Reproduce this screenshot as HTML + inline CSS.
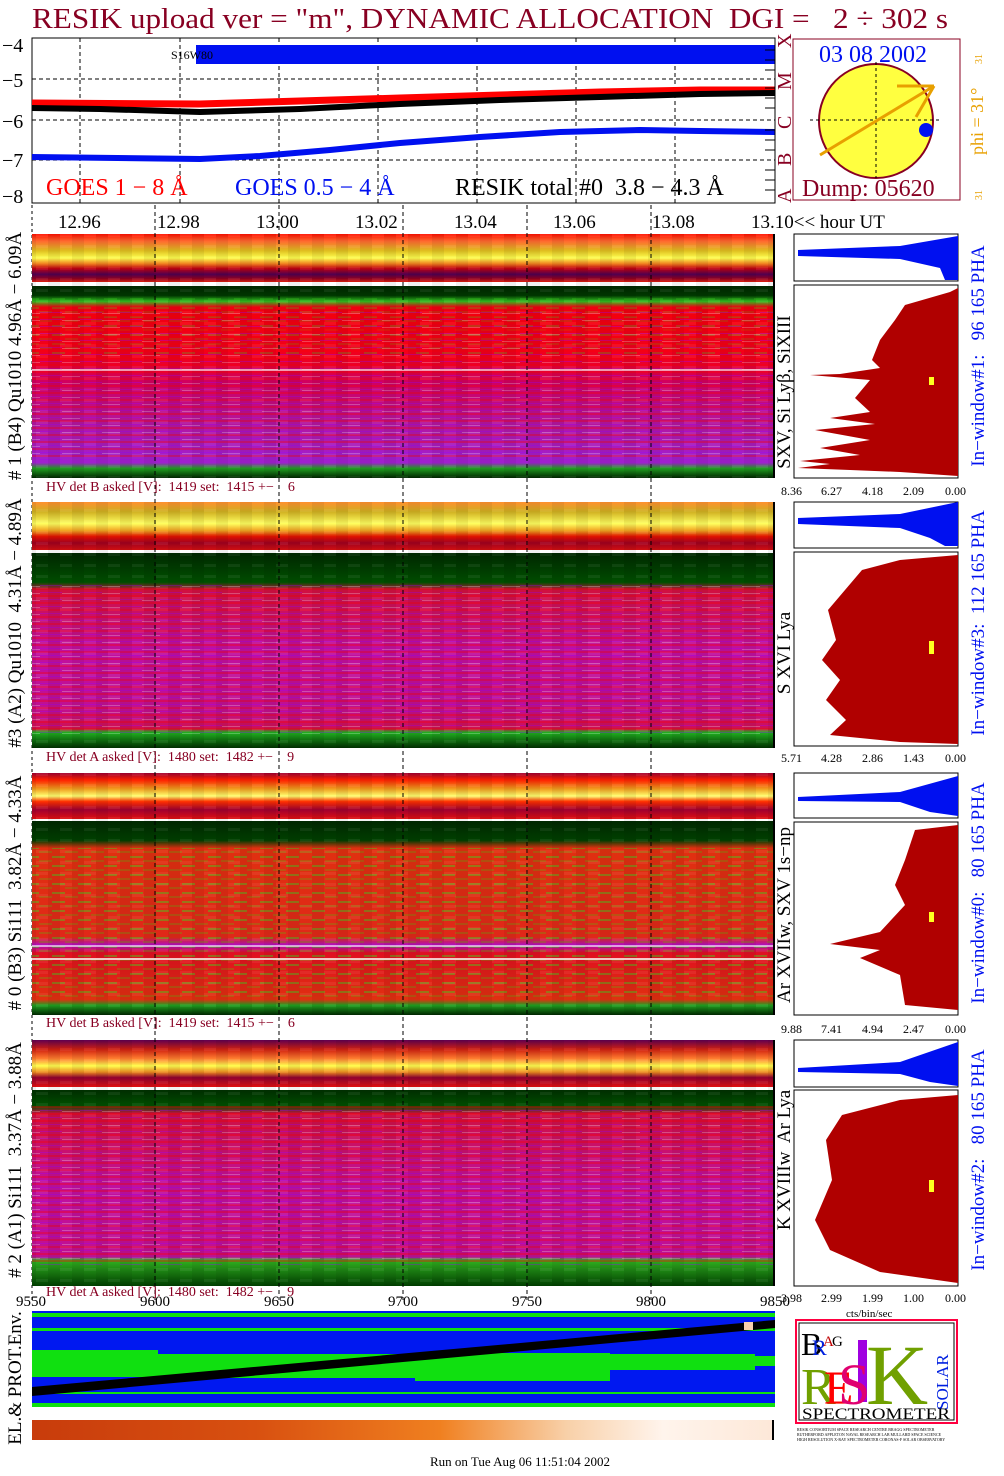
<!DOCTYPE html>
<html><head><meta charset="utf-8">
<style>
html,body{margin:0;padding:0;background:#fff;}
svg{display:block;font-family:"Liberation Serif",serif;}
text{white-space:pre;}
</style></head>
<body>
<svg width="1004" height="1476" viewBox="0 0 1004 1476" xmlns="http://www.w3.org/2000/svg" xml:space="preserve">
<defs>
<linearGradient id="band1" x1="0" y1="0" x2="0" y2="1">
<stop offset="0" stop-color="#ff1000"/><stop offset="0.15" stop-color="#ff6a30"/><stop offset="0.35" stop-color="#e0c020"/><stop offset="0.5" stop-color="#ffff50"/><stop offset="0.62" stop-color="#f08020"/><stop offset="0.72" stop-color="#c00010"/><stop offset="0.84" stop-color="#500050"/><stop offset="0.93" stop-color="#900020"/><stop offset="1" stop-color="#e02010"/>
</linearGradient>
<linearGradient id="band2" x1="0" y1="0" x2="0" y2="1">
<stop offset="0" stop-color="#ff9030"/><stop offset="0.2" stop-color="#d0b020"/><stop offset="0.45" stop-color="#ffff60"/><stop offset="0.6" stop-color="#f0a020"/><stop offset="0.72" stop-color="#e01000"/><stop offset="0.85" stop-color="#a00020"/><stop offset="1" stop-color="#d01010"/>
</linearGradient>
<linearGradient id="band3" x1="0" y1="0" x2="0" y2="1">
<stop offset="0" stop-color="#a00030"/><stop offset="0.15" stop-color="#ff2000"/><stop offset="0.35" stop-color="#f0a020"/><stop offset="0.5" stop-color="#ffff70"/><stop offset="0.62" stop-color="#ff3000"/><stop offset="0.8" stop-color="#a00030"/><stop offset="1" stop-color="#e01010"/>
</linearGradient>
<linearGradient id="band4" x1="0" y1="0" x2="0" y2="1">
<stop offset="0" stop-color="#600050"/><stop offset="0.2" stop-color="#d02010"/><stop offset="0.4" stop-color="#ff8030"/><stop offset="0.55" stop-color="#ffff50"/><stop offset="0.68" stop-color="#f09020"/><stop offset="0.8" stop-color="#900030"/><stop offset="1" stop-color="#e01010"/>
</linearGradient>
<linearGradient id="main1" x1="0" y1="0" x2="0" y2="1">
<stop offset="0" stop-color="#002800"/><stop offset="0.05" stop-color="#003800"/><stop offset="0.08" stop-color="#30c020"/><stop offset="0.11" stop-color="#f00010"/><stop offset="0.38" stop-color="#f00020"/><stop offset="0.5" stop-color="#d00060"/><stop offset="0.75" stop-color="#b018a8"/><stop offset="0.92" stop-color="#a020d0"/><stop offset="0.95" stop-color="#20a020"/><stop offset="1" stop-color="#002800"/>
</linearGradient>
<linearGradient id="main2" x1="0" y1="0" x2="0" y2="1">
<stop offset="0" stop-color="#002800"/><stop offset="0.15" stop-color="#005000"/><stop offset="0.19" stop-color="#d01040"/><stop offset="0.5" stop-color="#c010a0"/><stop offset="0.8" stop-color="#c01090"/><stop offset="0.9" stop-color="#d01050"/><stop offset="0.92" stop-color="#20b020"/><stop offset="1" stop-color="#003000"/>
</linearGradient>
<linearGradient id="main3" x1="0" y1="0" x2="0" y2="1">
<stop offset="0" stop-color="#002800"/><stop offset="0.1" stop-color="#004000"/><stop offset="0.14" stop-color="#e03010"/><stop offset="0.6" stop-color="#e02818"/><stop offset="0.64" stop-color="#b010c0"/><stop offset="0.68" stop-color="#e01020"/><stop offset="0.92" stop-color="#e03010"/><stop offset="0.95" stop-color="#20a020"/><stop offset="1" stop-color="#002800"/>
</linearGradient>
<linearGradient id="main4" x1="0" y1="0" x2="0" y2="1">
<stop offset="0" stop-color="#003000"/><stop offset="0.08" stop-color="#005000"/><stop offset="0.12" stop-color="#d01040"/><stop offset="0.5" stop-color="#c010a0"/><stop offset="0.85" stop-color="#c01090"/><stop offset="0.87" stop-color="#30b020"/><stop offset="1" stop-color="#004000"/>
</linearGradient>
<pattern id="stripes" width="40" height="7" patternUnits="userSpaceOnUse">
<rect x="0" y="0" width="40" height="2" fill="#ff0000" opacity="0.35"/>
<rect x="0" y="4" width="22" height="1" fill="#a000ff" opacity="0.35"/>
<rect x="22" y="5" width="18" height="1" fill="#ffffff" opacity="0.25"/>
</pattern>
<pattern id="cols" width="24" height="11" patternUnits="userSpaceOnUse">
<rect x="0" y="0" width="12" height="11" fill="#000" opacity="0.06"/>
<rect x="12" y="3" width="12" height="3" fill="#fff" opacity="0.06"/>
</pattern>
<pattern id="greens" width="26" height="9" patternUnits="userSpaceOnUse">
<rect x="0" y="1" width="13" height="2" fill="#40d020" opacity="0.45"/>
<rect x="13" y="5" width="13" height="2" fill="#809010" opacity="0.4"/>
</pattern>
<linearGradient id="env" x1="0" y1="0" x2="1" y2="0">
<stop offset="0" stop-color="#c83c0c"/><stop offset="0.3" stop-color="#d85010"/><stop offset="0.55" stop-color="#f08020"/><stop offset="0.72" stop-color="#f8d0a8"/><stop offset="0.85" stop-color="#fff4ec"/><stop offset="1" stop-color="#fde8d8"/>
</linearGradient>
</defs>

<text x="32" y="28" font-size="28" fill="#880022" textLength="916" lengthAdjust="spacingAndGlyphs">RESIK upload ver = "m", DYNAMIC ALLOCATION  DGI =   2 ÷ 302 s</text>

<rect x="32" y="38" width="743" height="165" fill="#fff" stroke="#000" stroke-width="1"/>
<g stroke="#000" stroke-dasharray="4,3" stroke-width="1">
<line x1="80" y1="38" x2="80" y2="203"/><line x1="180" y1="38" x2="180" y2="203"/><line x1="279" y1="38" x2="279" y2="203"/><line x1="378" y1="38" x2="378" y2="203"/><line x1="477" y1="38" x2="477" y2="203"/><line x1="576" y1="38" x2="576" y2="203"/><line x1="675" y1="38" x2="675" y2="203"/>
<line x1="32" y1="79" x2="775" y2="79"/><line x1="32" y1="120" x2="775" y2="120"/><line x1="32" y1="160" x2="775" y2="160"/>
</g>
<g font-size="20" fill="#000">
<text x="2" y="52">−4</text><text x="2" y="87">−5</text><text x="2" y="128">−6</text><text x="2" y="167">−7</text><text x="2" y="203">−8</text>
</g>
<rect x="196" y="45" width="579" height="19" fill="#0010f0"/>
<text x="171" y="59" font-size="12" fill="#000">S16W80</text>
<polyline points="32,103 200,104 300,101 400,98 500,95 600,92 700,90 775,90" fill="none" stroke="#ff0000" stroke-width="7"/>
<polyline points="32,108 100,109 200,112 300,109 400,104 500,100 600,97 700,94 775,93" fill="none" stroke="#000" stroke-width="6"/>
<polyline points="32,157 200,159 260,156 330,150 400,143 480,137 560,132 640,130 700,131 775,132" fill="none" stroke="#0010f0" stroke-width="6"/>
<text x="46" y="195" font-size="24" fill="#ff0000">GOES 1 − 8 Å</text>
<text x="235" y="195" font-size="24" fill="#0010f0">GOES 0.5 − 4 Å</text>
<text x="455" y="195" font-size="24" fill="#000">RESIK total #0  3.8 − 4.3 Å</text>
<g stroke="#000" stroke-width="1">
<line x1="775" y1="40" x2="775" y2="203"/>
<line x1="765" y1="50" x2="775" y2="50"/><line x1="765" y1="60" x2="775" y2="60"/><line x1="765" y1="70" x2="775" y2="70"/><line x1="765" y1="88" x2="775" y2="88"/><line x1="765" y1="98" x2="775" y2="98"/><line x1="765" y1="108" x2="775" y2="108"/><line x1="765" y1="130" x2="775" y2="130"/><line x1="765" y1="140" x2="775" y2="140"/><line x1="765" y1="150" x2="775" y2="150"/><line x1="765" y1="170" x2="775" y2="170"/><line x1="765" y1="180" x2="775" y2="180"/><line x1="765" y1="190" x2="775" y2="190"/>
</g>
<g font-size="20" fill="#880022">
<text transform="translate(791,203) rotate(-90)">A</text>
<text transform="translate(791,166) rotate(-90)">B</text>
<text transform="translate(791,129) rotate(-90)">C</text>
<text transform="translate(791,90) rotate(-90)">M</text>
<text transform="translate(791,48) rotate(-90)">X</text>
</g>
<rect x="793" y="39" width="167" height="161" fill="#fff" stroke="#880022" stroke-width="1"/>
<circle cx="876" cy="121" r="57" fill="#ffff40" stroke="#880022" stroke-width="2"/>
<g stroke="#000" stroke-dasharray="3,3"><line x1="876" y1="62" x2="876" y2="178"/><line x1="810" y1="120" x2="942" y2="120"/></g>
<g stroke="#e8a000" stroke-width="3" fill="none"><line x1="820" y1="155" x2="934" y2="86"/><line x1="897" y1="86" x2="934" y2="86"/><line x1="916" y1="117" x2="934" y2="86"/></g>
<circle cx="926" cy="130" r="7" fill="#0010f0"/>
<text x="819" y="62" font-size="24" fill="#0010f0">03 08 2002</text>
<text x="802" y="196" font-size="24" fill="#880022">Dump: 05620</text>
<text transform="translate(983,155) rotate(-90)" font-size="18" fill="#e8a000">phi = 31°</text>
<text transform="translate(982,64) rotate(-90)" font-size="10" fill="#e8a000">31</text>
<text transform="translate(982,200) rotate(-90)" font-size="10" fill="#e8a000">31</text>

<g font-size="19" fill="#000">
<text x="58" y="228">12.96</text><text x="157" y="228">12.98</text><text x="256" y="228">13.00</text><text x="355" y="228">13.02</text><text x="454" y="228">13.04</text><text x="553" y="228">13.06</text><text x="652" y="228">13.08</text><text x="751" y="228">13.10&lt;&lt; hour UT</text>
</g>
<line x1="32" y1="205" x2="32" y2="1300" stroke="#000" stroke-dasharray="3,3"/>

<rect x="32" y="234" width="742" height="48" fill="url(#band1)"/>
<rect x="32" y="286" width="742" height="192" fill="url(#main1)"/>
<rect x="32" y="296" width="742" height="60" fill="url(#greens)" opacity="0.6"/>
<rect x="32" y="310" width="742" height="150" fill="url(#stripes)"/>
<rect x="32" y="234" width="742" height="244" fill="url(#cols)"/>
<line x1="32" y1="370" x2="774" y2="370" stroke="#fff" stroke-width="1.5" opacity="0.8"/>
<rect x="32" y="502" width="742" height="48" fill="url(#band2)"/>
<rect x="32" y="553" width="742" height="195" fill="url(#main2)"/>
<rect x="32" y="585" width="742" height="150" fill="url(#stripes)"/>
<rect x="32" y="502" width="742" height="246" fill="url(#cols)"/>
<rect x="32" y="773" width="742" height="46" fill="url(#band3)"/>
<rect x="32" y="821" width="742" height="194" fill="url(#main3)"/>
<rect x="32" y="848" width="742" height="150" fill="url(#greens)"/>
<rect x="32" y="773" width="742" height="242" fill="url(#cols)"/>
<line x1="32" y1="946" x2="774" y2="946" stroke="#fff" stroke-width="1.5" opacity="0.8"/>
<line x1="32" y1="959" x2="774" y2="959" stroke="#fff" stroke-width="1.5"/>
<rect x="32" y="1040" width="742" height="47" fill="url(#band4)"/>
<rect x="32" y="1090" width="742" height="196" fill="url(#main4)"/>
<rect x="32" y="1105" width="742" height="160" fill="url(#stripes)"/>
<rect x="32" y="1040" width="742" height="246" fill="url(#cols)"/>

<g stroke="#000" stroke-dasharray="4,3" stroke-width="1">
<line x1="155" y1="205" x2="155" y2="1300"/><line x1="279" y1="205" x2="279" y2="1300"/><line x1="403" y1="205" x2="403" y2="1300"/><line x1="527" y1="205" x2="527" y2="1300"/><line x1="651" y1="205" x2="651" y2="1300"/>
</g>
<g stroke="#000" stroke-width="2"><line x1="774" y1="234" x2="774" y2="478"/><line x1="774" y1="502" x2="774" y2="748"/><line x1="774" y1="773" x2="774" y2="1015"/><line x1="774" y1="1040" x2="774" y2="1286"/></g>

<g font-size="14" fill="#880022">
<text x="46" y="491">HV det B asked [V]:  1419 set:  1415 +−    6</text>
<text x="46" y="761">HV det A asked [V]:  1480 set:  1482 +−    9</text>
<text x="46" y="1027">HV det B asked [V]:  1419 set:  1415 +−    6</text>
<text x="46" y="1296">HV det A asked [V]:  1480 set:  1482 +−    9</text>
</g>

<g font-size="19" fill="#000" text-anchor="middle">
<text transform="translate(21,356) rotate(-90)"># 1 (B4) Qu1010 4.96Å − 6.09Å</text>
<text transform="translate(21,623) rotate(-90)">#3 (A2) Qu1010  4.31Å − 4.89Å</text>
<text transform="translate(21,893) rotate(-90)"># 0 (B3) Si111  3.82Å − 4.33Å</text>
<text transform="translate(21,1160) rotate(-90)"># 2 (A1) Si111  3.37Å − 3.88Å</text>
<text transform="translate(21,1378) rotate(-90)">EL.&amp; PROT.Env.</text>
</g>
<g font-size="19" fill="#000" text-anchor="middle">
<text transform="translate(790,392) rotate(-90)">SXV, Si Lyβ, SiXIII</text>
<text transform="translate(790,653) rotate(-90)">S XVI Lya</text>
<text transform="translate(790,915) rotate(-90)">Ar XVIIw, SXV 1s−np</text>
<text transform="translate(790,1160) rotate(-90)">K XVIIIw  Ar Lya</text>
</g>
<g font-size="19" fill="#0010f0" text-anchor="middle">
<text transform="translate(984,356) rotate(-90)">In−window#1:   96 165 PHA</text>
<text transform="translate(984,623) rotate(-90)">In−window#3:  112 165 PHA</text>
<text transform="translate(984,893) rotate(-90)">In−window#0:   80 165 PHA</text>
<text transform="translate(984,1160) rotate(-90)">In−window#2:   80 165 PHA</text>
</g>

<g fill="#fff" stroke="#000" stroke-width="1">
<rect x="794" y="234" width="164" height="47"/><rect x="794" y="285" width="164" height="193"/>
<rect x="794" y="502" width="164" height="46"/><rect x="794" y="552" width="164" height="194"/>
<rect x="794" y="773" width="164" height="45"/><rect x="794" y="822" width="164" height="193"/>
<rect x="794" y="1040" width="164" height="47"/><rect x="794" y="1090" width="164" height="196"/>
</g>
<g fill="#0010f0">
<polygon points="798,250 900,246 958,236 958,280 945,280 940,268 900,259 798,256"/>
<polygon points="798,518 900,514 958,502 958,546 945,546 930,538 900,528 798,524"/>
<polygon points="798,797 900,792 958,776 958,816 930,812 900,802 798,801"/>
<polygon points="798,1068 900,1062 958,1042 958,1086 930,1082 900,1074 798,1072"/>
</g>
<g fill="#b00000">
<polygon points="958,288 950,292 905,305 895,320 880,340 872,360 880,368 840,374 810,375 870,380 855,398 870,412 830,418 875,424 815,430 870,440 820,448 860,455 800,461 830,464 798,468 850,470 900,472 958,476"/>
<polygon points="958,555 900,560 862,570 845,590 828,610 836,640 822,660 840,680 826,700 846,720 830,735 900,742 958,744"/>
<polygon points="958,825 915,830 905,860 895,885 905,905 880,932 830,944 880,950 860,958 900,975 905,1005 958,1010"/>
<polygon points="958,1095 900,1100 842,1115 826,1140 832,1180 815,1220 830,1250 880,1272 958,1283"/>
</g>
<g fill="#ffff20"><rect x="929" y="377" width="5" height="8"/><rect x="929" y="641" width="5" height="13"/><rect x="929" y="912" width="5" height="10"/><rect x="929" y="1180" width="5" height="12"/></g>
<g font-size="12" fill="#000">
<text x="781" y="495">8.36</text><text x="821" y="495">6.27</text><text x="862" y="495">4.18</text><text x="903" y="495">2.09</text><text x="945" y="495">0.00</text>
<text x="781" y="762">5.71</text><text x="821" y="762">4.28</text><text x="862" y="762">2.86</text><text x="903" y="762">1.43</text><text x="945" y="762">0.00</text>
<text x="781" y="1033">9.88</text><text x="821" y="1033">7.41</text><text x="862" y="1033">4.94</text><text x="903" y="1033">2.47</text><text x="945" y="1033">0.00</text>
<text x="781" y="1302">3.98</text><text x="821" y="1302">2.99</text><text x="862" y="1302">1.99</text><text x="903" y="1302">1.00</text><text x="945" y="1302">0.00</text>
<text x="846" y="1317" font-size="11">cts/bin/sec</text>
</g>

<g font-size="15" fill="#000">
<text x="16" y="1306">9550</text><text x="140" y="1306">9600</text><text x="264" y="1306">9650</text><text x="388" y="1306">9700</text><text x="512" y="1306">9750</text><text x="636" y="1306">9800</text><text x="760" y="1306">9850</text>
</g>
<rect x="32" y="1311" width="743" height="96" fill="#0018f0"/>
<g fill="#10e010">
<rect x="32" y="1313" width="743" height="4"/>
<rect x="32" y="1328" width="743" height="3"/>
<rect x="32" y="1350" width="126" height="27"/>
<rect x="158" y="1354" width="257" height="24"/>
<rect x="415" y="1353" width="195" height="28"/>
<rect x="610" y="1354" width="145" height="16"/>
<rect x="755" y="1356" width="20" height="10"/>
<rect x="32" y="1392" width="743" height="2"/>
<rect x="32" y="1403" width="743" height="4"/>
</g>
<polygon points="32,1387 775,1320 775,1328 32,1396" fill="#000"/>
<rect x="744" y="1322" width="9" height="8" fill="#f8d0b0"/>
<rect x="32" y="1420" width="742" height="20" fill="url(#env)"/>
<rect x="772" y="1420" width="2" height="20" fill="#000"/>

<rect x="796" y="1320" width="161" height="103" fill="#fff" stroke="#ff0040" stroke-width="2"/>
<rect x="799" y="1323" width="155" height="97" fill="none" stroke="#000" stroke-width="1"/>
<text x="801" y="1355" font-size="32" fill="#000">B</text>
<text x="812" y="1355" font-size="22" fill="#0020e0">R</text>
<text x="823" y="1346" font-size="15" fill="#c00000">A</text>
<text x="832" y="1346" font-size="15" fill="#000">G</text>
<text x="801" y="1404" font-size="52" fill="#70a000">R</text>
<text x="824" y="1404" font-size="48" fill="#ff0000">E</text>
<rect x="858" y="1340" width="9" height="62" fill="#a000e0"/>
<text x="838" y="1404" font-size="58" fill="#e00070">S</text>
<text x="866" y="1404" font-size="86" fill="#70a000">K</text>
<text transform="translate(948,1410) rotate(-90)" font-size="17" fill="#0020e0">SOLAR</text>
<text x="802" y="1419" font-size="16" fill="#000" textLength="148" lengthAdjust="spacingAndGlyphs">SPECTROMETER</text>
<g font-size="4" fill="#000"><text x="797" y="1431">RESIK CONSORTIUM SPACE RESEARCH CENTRE BRAGG SPECTROMETER</text><text x="797" y="1436">RUTHERFORD APPLETON NAVAL RESEARCH LAB MULLARD SPACE SCIENCE</text><text x="797" y="1441">HIGH RESOLUTION X-RAY SPECTROMETER CORONAS-F SOLAR OBSERVATORY</text></g>

<text x="520" y="1466" font-size="13" fill="#000" text-anchor="middle">Run on Tue Aug 06 11:51:04 2002</text>
</svg>
</body></html>
